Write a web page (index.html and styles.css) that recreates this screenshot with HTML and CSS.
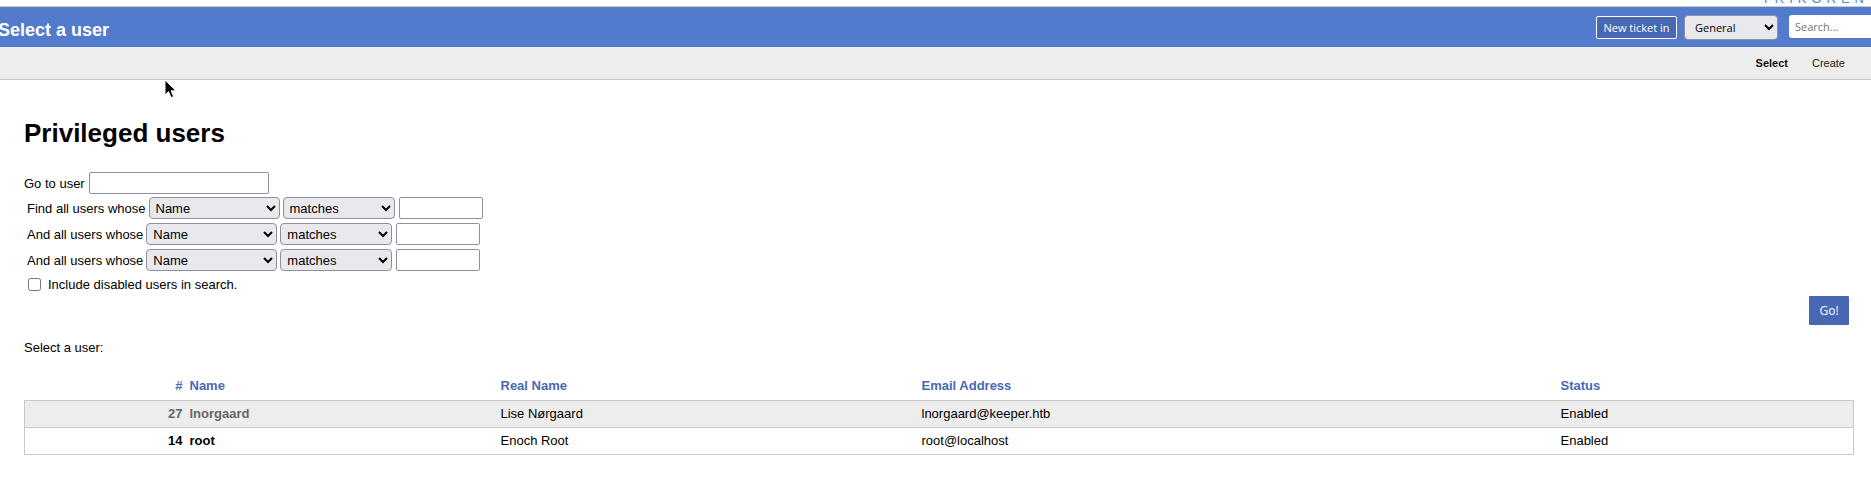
FILE: index.html
```html
<!DOCTYPE html>
<html lang="en">
<head>
    <meta charset="UTF-8">
    <title>Select a user</title>
    <link rel="stylesheet" href="styles.css">
</head>
<body>
    <div class="logoStrip">
        <span class="logoText">TRIKOREN</span>
    </div>
    <div class="titleBar">
        <h1 class="pageTitle">Select a user</h1>
        <div class="topActions">
            <button class="newTicket">New ticket in</button>
            <select class="queueSelect"><option>General</option></select>
            <input class="searchBox" type="text" placeholder="Search...">
        </div>
    </div>
    <div class="subNav">
        <a class="navItem active">Select</a>
        <a class="navItem">Create</a>
    </div>
    <svg class="cursor" width="14" height="21" viewBox="0 0 14 21">
        <path d="M1 1 L1 16 L4.5 12.6 L7 18.6 L9.6 17.5 L7.1 11.8 L12 11.8 Z" fill="#000" stroke="#fff" stroke-width="1"/>
    </svg>
    <div class="content">
        <h2 class="sectionTitle">Privileged users</h2>
        <div class="goRow">Go to user <input class="goInput" type="text"></div>
        <div class="findRow first">
            <span>Find all users whose</span>
            <select class="fieldSelect"><option>Name</option></select>
            <select class="opSelect"><option>matches</option></select>
            <input class="valueInput" type="text">
        </div>
        <div class="findRow">
            <span>And all users whose</span>
            <select class="fieldSelect"><option>Name</option></select>
            <select class="opSelect"><option>matches</option></select>
            <input class="valueInput" type="text">
        </div>
        <div class="findRow">
            <span>And all users whose</span>
            <select class="fieldSelect"><option>Name</option></select>
            <select class="opSelect"><option>matches</option></select>
            <input class="valueInput" type="text">
        </div>
        <label class="disabledRow"><input type="checkbox"> Include disabled users in search.</label>
        <div class="submitRow"><button class="goBtn">Go!</button></div>
        <p class="selectLabel">Select a user:</p>
        <table class="userTable">
            <thead>
                <tr>
                    <th class="colId">#</th>
                    <th class="colName">Name</th>
                    <th class="colReal">Real Name</th>
                    <th class="colEmail">Email Address</th>
                    <th class="colStatus">Status</th>
                </tr>
            </thead>
            <tbody>
                <tr class="odd">
                    <td class="colId"><b>27</b></td>
                    <td class="colName"><b>lnorgaard</b></td>
                    <td class="colReal">Lise Nørgaard</td>
                    <td class="colEmail">lnorgaard@keeper.htb</td>
                    <td class="colStatus">Enabled</td>
                </tr>
                <tr class="even">
                    <td class="colId"><b>14</b></td>
                    <td class="colName"><b>root</b></td>
                    <td class="colReal">Enoch Root</td>
                    <td class="colEmail">root@localhost</td>
                    <td class="colStatus">Enabled</td>
                </tr>
            </tbody>
        </table>
    </div>
</body>
</html>
```

FILE: styles.css
```css
* {
    box-sizing: border-box;
}
html, body {
    margin: 0;
    padding: 0;
    overflow: hidden;
}
body {
    position: relative;
    height: 481px;
    background: #fff;
    color: #000;
    font-family: "Liberation Sans", Arial, sans-serif;
    font-size: 13px;
}
input, select, button {
    font-family: "Open Sans", "Liberation Sans", sans-serif;
}
.logoStrip {
    height: 7px;
    border-bottom: 1px solid #c8c8c8;
    overflow: hidden;
    text-align: right;
    padding-right: 0;
}
.logoText {
    display: block;
    margin: -9px 2px 0 0;
    font-size: 13px;
    line-height: 15px;
    letter-spacing: 5px;
    color: #4b8fc0;
}
.titleBar {
    display: flex;
    align-items: flex-start;
    justify-content: space-between;
    height: 40px;
    background: #527bcd;
    overflow: hidden;
}
.pageTitle {
    margin: 12px 0 0 -2px;
    font-size: 18px;
    line-height: 22px;
    font-weight: bold;
    color: #fff;
}
.topActions {
    display: flex;
    align-items: flex-start;
    gap: 7px;
    margin-right: -3px;
}
.newTicket {
    width: 81px;
    height: 23px;
    margin-top: 9px;
    padding: 0;
    border: 1px solid #fff;
    border-radius: 2px;
    background: #4868b4;
    color: #fff;
    font-size: 11px;
}
.queueSelect {
    width: 94px;
    height: 25px;
    margin-top: 8px;
    padding-left: 6px;
    border: 1px solid #8f8f9d;
    border-radius: 4px;
    background-color: #e9e9ed;
    color: #000;
    font-size: 11px;
}
.searchBox {
    width: 85px;
    height: 23px;
    margin: 8px 0 0 4px;
    padding: 0 6px;
    border: 0;
    border-radius: 3px 0 0 3px;
    background: #fff;
    font-size: 11px;
}
.subNav {
    display: flex;
    justify-content: flex-end;
    gap: 24px;
    height: 33px;
    padding: 10px 26px 0 0;
    background: #ededed;
    border-bottom: 1px solid #c8c8c8;
    font-size: 11px;
    line-height: 13px;
}
.navItem {
    color: #222;
}
.navItem.active {
    font-weight: bold;
    color: #111;
}
.cursor {
    position: absolute;
    left: 164px;
    top: 79px;
}
.content {
    padding: 38px 20px 0 24px;
}
.sectionTitle {
    margin: 0 0 24px;
    font-size: 26px;
    line-height: 30px;
    font-weight: bold;
}
.goRow {
    display: flex;
    align-items: center;
    gap: 4px;
    height: 22px;
}
.goInput {
    width: 180px;
    height: 22px;
    border: 1px solid #8f8f9d;
    border-radius: 2px;
}
.findRow {
    display: flex;
    align-items: center;
    gap: 3px;
    height: 22px;
    margin-top: 4px;
    padding-left: 3px;
}
.findRow.first {
    margin-top: 3px;
}
.fieldSelect, .opSelect {
    height: 22px;
    padding-left: 2px;
    border: 1px solid #8f8f9d;
    border-radius: 4px;
    background-color: #e9e9ed;
    color: #000;
    font-family: "Liberation Sans", sans-serif;
    font-size: 13px;
}
.fieldSelect {
    width: 131px;
}
.opSelect {
    width: 112px;
}
.valueInput {
    width: 84px;
    height: 22px;
    margin-left: 1px;
    border: 1px solid #8f8f9d;
    border-radius: 2px;
}
.disabledRow {
    display: flex;
    align-items: center;
    gap: 7px;
    height: 20px;
    margin-top: 3px;
    padding-left: 4px;
}
.disabledRow input {
    width: 13px;
    height: 13px;
    margin: 0;
}
.submitRow {
    display: flex;
    justify-content: flex-end;
    margin-top: 2px;
}
.goBtn {
    width: 40px;
    height: 29px;
    margin-right: 2px;
    padding: 0;
    border: 0;
    border-radius: 1px;
    background: #4868b4;
    color: #fff;
    font-size: 12px;
}
.selectLabel {
    margin: 15px 0 0;
    line-height: 15px;
}
.userTable {
    width: 1830px;
    margin-top: 16px;
    border-collapse: collapse;
    table-layout: fixed;
}
.userTable th {
    height: 29px;
    padding: 0;
    color: #4868b4;
    font-size: 13px;
    text-align: left;
}
.userTable td {
    height: 27px;
    padding: 0;
    border-top: 1px solid #c8c8c8;
    border-bottom: 1px solid #c8c8c8;
}
.userTable tr td:first-child {
    border-left: 1px solid #c8c8c8;
}
.userTable tr td:last-child {
    border-right: 1px solid #c8c8c8;
}
.userTable .odd td {
    background: #ededed;
}
.userTable .odd b {
    color: #666;
}
.colId {
    width: 158px;
    text-align: right;
}
.userTable th.colId {
    text-align: right;
    padding-right: 0;
}
.colName {
    width: 318px;
    padding-left: 7px !important;
}
.colReal {
    width: 421px;
}
.colEmail {
    width: 639px;
}
```
